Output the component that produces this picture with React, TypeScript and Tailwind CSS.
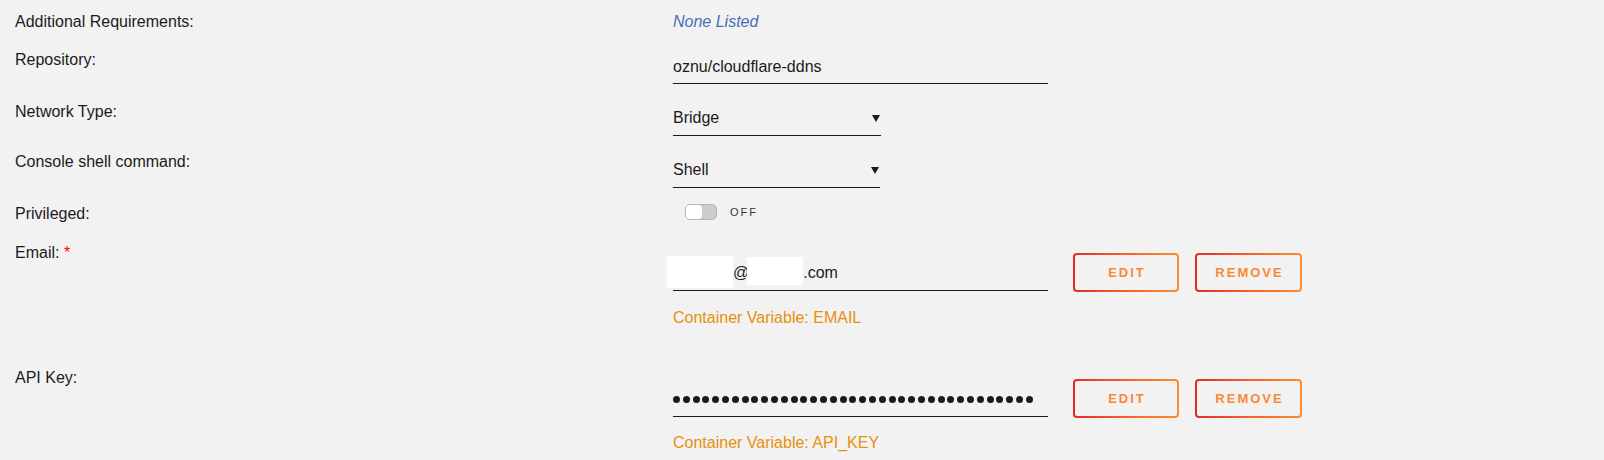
import type { ReactNode } from "react";

function Row({
  label,
  children,
  className = "",
  valueClass = "",
}: {
  label: ReactNode;
  children: ReactNode;
  className?: string;
  valueClass?: string;
}) {
  return (
    <div className={`flex ${className}`}>
      <div className="w-[658px] shrink-0 leading-5">{label}</div>
      <div className={`leading-5 ${valueClass}`}>{children}</div>
    </div>
  );
}

function Caret() {
  return (
    <svg width="8" height="7" viewBox="0 0 8 7" className="mr-[1px]">
      <polygon points="0,0 8,0 4,7" fill="#1c1b1b" />
    </svg>
  );
}

function GradButton({ children, width }: { children: ReactNode; width: string }) {
  return (
    <div className={`h-[39px] ${width} rounded-[4px] bg-linear-to-r from-[#e22828] to-[#ff8c2f] p-[2px]`}>
      <div className="flex h-full w-full items-center justify-center rounded-[2px] bg-[#f2f2f2] pl-[2px] text-[13px] font-bold tracking-[2px] text-[#f98a35]">
        {children}
      </div>
    </div>
  );
}

function Buttons() {
  return (
    <>
      <div className="ml-[25px]">
        <GradButton width="w-[106px]">EDIT</GradButton>
      </div>
      <div className="ml-[16px]">
        <GradButton width="w-[107px]">REMOVE</GradButton>
      </div>
    </>
  );
}

export default function App() {
  const dots = Array.from({ length: 37 });
  return (
    <div className="h-[460px] w-full overflow-hidden bg-[#f2f2f2] pl-[15px] pt-[12px] font-['Liberation_Sans',Arial,sans-serif] text-[16px] text-[#1c1b1b]">
      <Row label="Additional Requirements:" valueClass="italic text-[#486dba]">
        None Listed
      </Row>

      <Row label="Repository:" className="mt-[18px]">
        <div className="w-[375px] border-b border-[#1c1b1b] pb-[6px] pt-[7px]">oznu/cloudflare-ddns</div>
      </Row>

      <Row label="Network Type:" className="mt-[18px]">
        <div className="flex w-[208px] items-center justify-between border-b border-[#1c1b1b] pb-[7px] pt-[6px]">
          <span>Bridge</span>
          <Caret />
        </div>
      </Row>

      <Row label="Console shell command:" className="mt-[16px]">
        <div className="flex w-[207px] items-center justify-between border-b border-[#1c1b1b] pb-[7px] pt-[8px]">
          <span>Shell</span>
          <Caret />
        </div>
      </Row>

      <Row label="Privileged:" className="mt-[16px]">
        <div className="flex h-[16px] items-center pl-[12px]">
          <div className="flex h-[16px] w-[32px] rounded-[5px] border border-[#b5b5b5] bg-[#cccccc]">
            <div className="h-full w-[16px] rounded-[4px] bg-white" />
          </div>
          <span className="ml-[13px] text-[11px] leading-4 tracking-[2px] text-[#333]">OFF</span>
        </div>
      </Row>

      <Row
        label={
          <>
            Email: <span className="text-[#ff0000]">*</span>
          </>
        }
        className="mt-[19px]"
        valueClass="pt-[10px]"
      >
        <div className="flex items-start">
          <div className="relative w-[375px] border-b border-[#1c1b1b] pb-[7px] pt-[10px]">
            <div className="flex">
              <span className="w-[60px]" />
              <span>@</span>
              <span className="w-[54px]" />
              <span>.com</span>
            </div>
            <div className="absolute left-[-6px] top-[3px] h-[32px] w-[66px] bg-white" />
            <div className="absolute left-[74px] top-[4px] h-[28px] w-[56px] bg-white" />
          </div>
          <Buttons />
        </div>
        <div className="mt-[16px] text-[#e8900c]">Container Variable: EMAIL</div>
      </Row>

      <Row label="API Key:" className="mt-[40px]" valueClass="pt-[11px]">
        <div className="flex items-start">
          <div className="w-[375px] border-b border-[#1c1b1b] pb-[7px] pt-[10px]">
            <div className="flex h-5 items-center gap-[2.8px]">
              {dots.map((_, i) => (
                <span key={i} className="h-[7px] w-[7px] rounded-full bg-[#1c1b1b]" />
              ))}
            </div>
          </div>
          <Buttons />
        </div>
        <div className="mt-[15px] text-[#e8900c]">Container Variable: API_KEY</div>
      </Row>
    </div>
  );
}
